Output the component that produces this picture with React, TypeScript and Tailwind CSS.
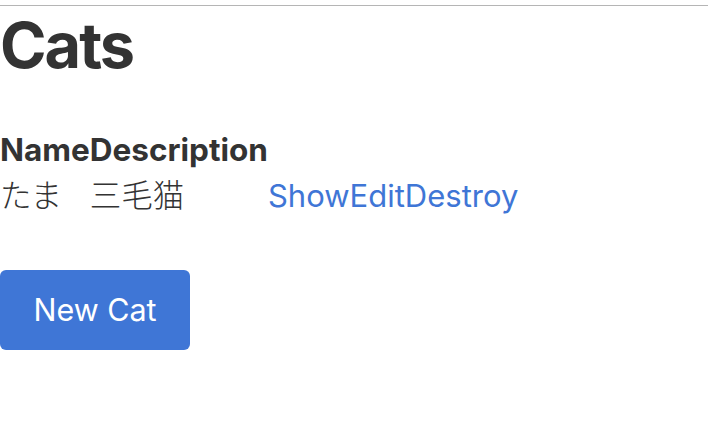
export default function App() {
  const cats = [{ name: 'たま', description: '三毛猫' }]

  return (
    <div
      className="min-h-[434px] bg-white text-[#333333]"
      style={{ fontFamily: 'Inter, "Noto Sans CJK JP", sans-serif' }}
    >
      <div className="pt-[5px]">
        <div className="border-t border-[#b5b5b5]" />
      </div>
      <h1 className="mt-[3px] text-[63px] font-bold leading-[72px] tracking-[-2px]">Cats</h1>

      <table className="mt-[46px] border-collapse text-[31.5px] leading-[46px]">
        <thead>
          <tr>
            <th className="p-0 text-left font-bold">Name</th>
            <th className="p-0 text-left font-bold">Description</th>
            <th className="p-0" colSpan={3}></th>
          </tr>
        </thead>
        <tbody>
          {cats.map((cat) => (
            <tr key={cat.name}>
              <td className="p-0 font-light">{cat.name}</td>
              <td className="p-0 font-light">{cat.description}</td>
              <td className="p-0 text-[31px] text-[#3f76d6]">Show</td>
              <td className="p-0 text-[31px] text-[#3f76d6]">Edit</td>
              <td className="p-0 text-[31px] text-[#3f76d6]">Destroy</td>
            </tr>
          ))}
        </tbody>
      </table>

      <button className="mt-[51px] block h-[80px] w-[190px] rounded-[6px] bg-[#3f76d6] text-[30.5px] text-white">
        New Cat
      </button>
    </div>
  )
}
